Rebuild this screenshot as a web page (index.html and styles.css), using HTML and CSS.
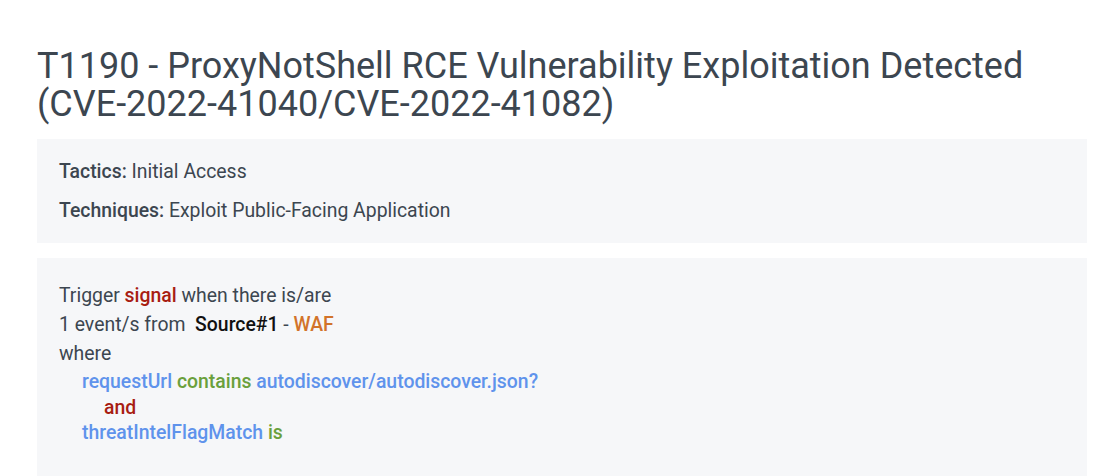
FILE: index.html
```html
<!DOCTYPE html>
<html>
<head>
<meta charset="utf-8">
<link rel="stylesheet" href="styles.css">
</head>
<body>
<div class="page">
  <h1 class="title">T1190 - ProxyNotShell RCE Vulnerability Exploitation Detected (CVE-2022-41040/CVE-2022-41082)</h1>
  <div class="panel meta">
    <p class="row"><b>Tactics:</b> Initial Access</p>
    <p class="row"><b>Techniques:</b> Exploit Public-Facing Application</p>
  </div>
  <div class="panel rule">
    <div class="line">Trigger <span class="red">signal</span> when there is/are</div>
    <div class="line">1 event/s from &nbsp;<span class="src">Source#1</span> - <span class="orange">WAF</span></div>
    <div class="line">where</div>
    <div class="line cond ind1"><span class="blue">requestUrl</span> <span class="green">contains</span> <span class="blue">autodiscover/autodiscover.json?</span></div>
    <div class="line cond op ind2"><span class="red">and</span></div>
    <div class="line cond last ind1"><span class="blue">threatIntelFlagMatch</span> <span class="green">is</span></div>
  </div>
</div>
</body>
</html>
```

FILE: styles.css
```css
html, body {
  margin: 0;
  padding: 0;
  background: #ffffff;
}
body {
  font-family: Roboto, "Noto Sans", sans-serif;
  color: #3c4650;
}
.page {
  padding: 47px 33px 0 37px;
}
.title {
  margin: 0 0 16px 0;
  font-size: 36px;
  font-weight: 400;
  line-height: 38px;
  color: #3c4650;
}
.panel {
  background: #f6f7f9;
}
.meta {
  padding: 13px 22px 13px 22px;
  margin-bottom: 15px;
}
.row {
  margin: 0;
  font-size: 19.4px;
  line-height: 39px;
}
.row b {
  font-weight: 500;
}
.rule {
  padding: 23px 22px 40px 22px;
  font-size: 19.4px;
}
.line {
  line-height: 29px;
}
.line.cond {
  line-height: 27px;
}
.line.cond.op {
  line-height: 25px;
}
.line.cond.last {
  line-height: 25px;
}
.ind1 { padding-left: 23px; }
.ind2 { padding-left: 45px; }
.red { color: #a81d12; font-weight: 500; }
.orange { color: #d2732a; font-weight: 500; }
.src { color: #111111; font-weight: 500; }
.blue { color: #5f93ec; font-weight: 500; }
.green { color: #6aa03c; font-weight: 500; }
```
